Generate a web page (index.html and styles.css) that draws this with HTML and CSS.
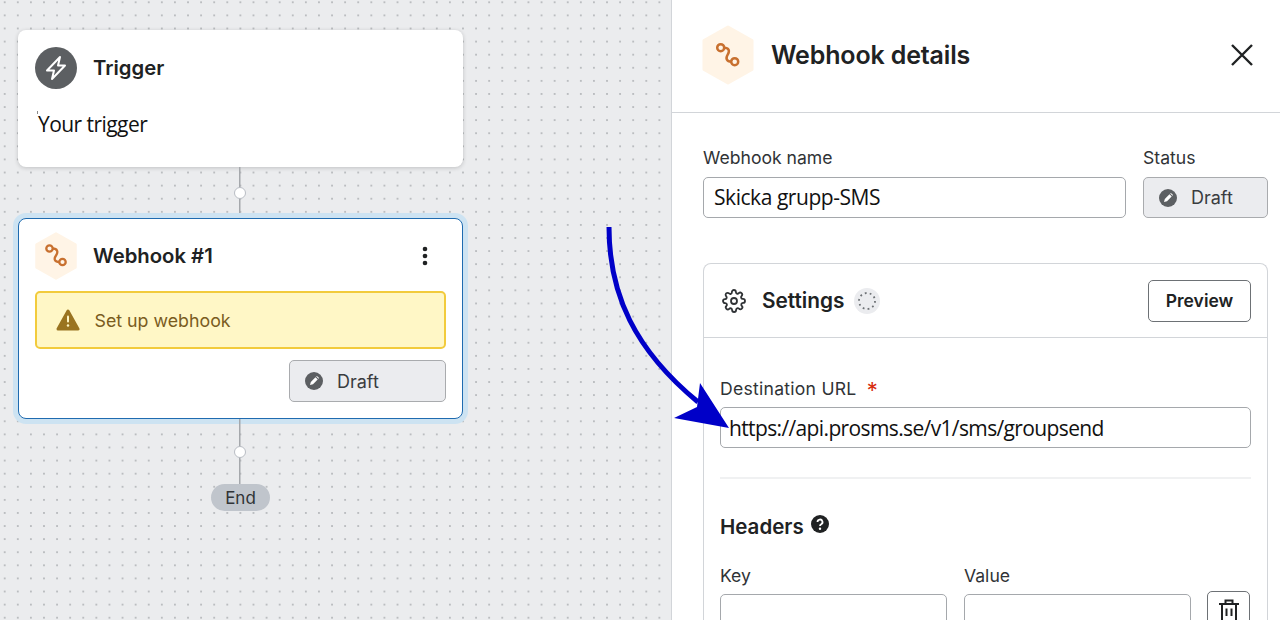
FILE: index.html
```html
<!DOCTYPE html>
<html lang="en">
<head>
  <meta charset="UTF-8" />
  <meta name="viewport" content="width=device-width, initial-scale=1.0"/>
  <title>Webhook details</title>
  <link rel="stylesheet" href="styles.css">
</head>
<body>
  <svg class="defs" width="0" height="0">
    <symbol id="hook" viewBox="0 0 52 60">
      <path d="M26 2 50 15.500V44.500L26 58 2 44.500V15.500Z" fill="#fff4e6" stroke="#fff4e6" stroke-width="3" stroke-linejoin="round"/>
      <circle cx="18.700" cy="22.700" r="3.500" fill="none" stroke="#c8702f" stroke-width="2.500"/>
      <circle cx="32.700" cy="36.700" r="3.500" fill="none" stroke="#c8702f" stroke-width="2.500"/>
      <path d="M22 22.700C27 22.700 28 26 25.700 29.700 23.400 33.400 24.400 36.700 29.400 36.700" fill="none" stroke="#c8702f" stroke-width="2.500"/>
    </symbol>
    <symbol id="hook-small" viewBox="0 0 42 48">
      <path d="M21 1.500 40.500 12.500V35.500L21 46.500 1.500 35.500V12.500Z" fill="#fff4e6" stroke="#fff4e6" stroke-width="2.500" stroke-linejoin="round"/>
      <circle cx="14.500" cy="16.500" r="3.200" fill="none" stroke="#c8702f" stroke-width="2.300"/>
      <circle cx="27.500" cy="30" r="3.200" fill="none" stroke="#c8702f" stroke-width="2.300"/>
      <path d="M17.500 16.500C22.500 16.500 23.500 20 21 23.500 18.500 27 19.500 30 24.500 30" fill="none" stroke="#c8702f" stroke-width="2.300"/>
    </symbol>
    <symbol id="pencil" viewBox="0 0 18 18">
      <circle cx="9" cy="9" r="9" fill="#5c5f62"/>
      <path d="M5 13l.8-3 4.700-4.700 2.200 2.200L8 12.200z" fill="#fff"/>
      <path d="M11.200 4.600l.7-.7 2.200 2.200-.7.7z" fill="#fff"/>
    </symbol>
  </svg>

  <main class="canvas">
    <section class="card">
      <div class="card-head">
        <svg class="node-icon" viewBox="0 0 42 42">
          <circle cx="21" cy="21" r="21" fill="#5c5f62"/>
          <path d="M25 10 12 23.500H19L17 32 30 18.500H23Z" fill="none" stroke="#fff" stroke-width="2" stroke-linejoin="round"/>
        </svg>
        <h2>Trigger</h2>
      </div>
      <p class="card-text">Your trigger</p>
    </section>

    <div class="connector"><span class="dot"></span></div>

    <section class="card card-selected">
      <div class="card-head">
        <svg class="node-icon node-hex"><use href="#hook-small"/></svg>
        <h2>Webhook #1</h2>
        <svg class="more" width="6" height="20" viewBox="0 0 6 20">
          <circle cx="3" cy="3" r="2.300" fill="#202223"/>
          <circle cx="3" cy="10" r="2.300" fill="#202223"/>
          <circle cx="3" cy="17" r="2.300" fill="#202223"/>
        </svg>
      </div>
      <div class="banner">
        <svg width="24" height="22" viewBox="0 0 24 22">
          <path d="M12 2 22 20H2Z" fill="#9a7420" stroke="#9a7420" stroke-width="3" stroke-linejoin="round"/>
          <rect x="11" y="6.500" width="2" height="7" rx="1" fill="#fff7c6"/>
          <circle cx="12" cy="16.500" r="1.200" fill="#fff7c6"/>
        </svg>
        <span>Set up webhook</span>
      </div>
      <div class="card-foot">
        <button class="status status-node"><svg width="18" height="18"><use href="#pencil"/></svg>Draft</button>
      </div>
    </section>

    <div class="connector connector-long"><span class="dot"></span></div>
    <div class="end-pill">End</div>
  </main>

  <aside class="panel">
    <header class="panel-head">
      <svg class="panel-hex"><use href="#hook"/></svg>
      <h1>Webhook details</h1>
      <svg class="close" width="24" height="24" viewBox="0 0 24 24">
        <path d="M2 2 22 22M22 2 2 22" stroke="#202223" stroke-width="2.400" fill="none"/>
      </svg>
    </header>

    <div class="panel-body">
      <div class="name-row">
        <div class="field">
          <label>Webhook name</label>
          <div class="input input-text">Skicka grupp-SMS</div>
        </div>
        <div class="field">
          <label>Status</label>
          <button class="status"><svg width="18" height="18"><use href="#pencil"/></svg>Draft</button>
        </div>
      </div>

      <section class="settings">
        <div class="settings-head">
          <svg width="24" height="24" viewBox="0 0 24 24" fill="none" stroke="#303336" stroke-width="1.800" stroke-linejoin="round">
            <circle cx="12" cy="12" r="3"/>
            <path d="M19.400 15a1.650 1.650 0 0 0 .33 1.820l.06.06a2 2 0 0 1-2.830 2.830l-.06-.06a1.650 1.650 0 0 0-2.800 1.170V21a2 2 0 0 1-4 0v-.09a1.650 1.650 0 0 0-2.800-1.170l-.06.06a2 2 0 0 1-2.830-2.830l.06-.06a1.650 1.650 0 0 0-1.170-2.800H3a2 2 0 0 1 0-4h.09a1.650 1.650 0 0 0 1.170-2.800l-.06-.06a2 2 0 0 1 2.830-2.830l.06.06a1.650 1.650 0 0 0 2.800-1.170V3a2 2 0 0 1 4 0v.09a1.650 1.650 0 0 0 2.800 1.170l.06-.06a2 2 0 0 1 2.830 2.830l-.06.06a1.650 1.650 0 0 0 1.170 2.800H21a2 2 0 0 1 0 4h-.09a1.650 1.650 0 0 0-1.510 1z"/>
          </svg>
          <h3>Settings</h3>
          <svg width="26" height="26" viewBox="0 0 26 26">
            <circle cx="13" cy="13" r="13" fill="#ebecef"/>
            <circle cx="13" cy="13" r="8" fill="none" stroke="#6d7175" stroke-width="1.800" stroke-dasharray="1.800 3.230"/>
          </svg>
          <button class="preview">Preview</button>
        </div>

        <div class="settings-body">
          <label class="label-wide">Destination URL <span class="req">*</span></label>
          <div class="input input-text">https://api.prosms.se/v1/sms/groupsend</div>
          <hr>
          <h4>Headers
            <svg width="18" height="18" viewBox="0 0 18 18">
              <circle cx="9" cy="9" r="9" fill="#202223"/>
              <path d="M6.500 7a2.500 2.500 0 1 1 3.700 2.200c-.8.500-1.200.8-1.200 1.700" fill="none" stroke="#fff" stroke-width="1.800"/>
              <circle cx="9" cy="13.700" r="1.200" fill="#fff"/>
            </svg>
          </h4>
          <div class="kv-row">
            <div class="field">
              <label>Key</label>
              <div class="input"></div>
            </div>
            <div class="field">
              <label>Value</label>
              <div class="input"></div>
            </div>
            <button class="trash">
              <svg width="22" height="26" viewBox="0 0 22 26" fill="none" stroke="#202223" stroke-width="2">
                <path d="M1 6H21M7.500 6V2.500H14.500V6M4 6V23H18V6M8.500 10.500V18M13.500 10.500V18"/>
              </svg>
            </button>
          </div>
        </div>
      </section>
    </div>
  </aside>

  <svg class="arrow" width="140" height="215" viewBox="600 220 140 215">
    <path d="M609 227C609 295 635 350 698 402" fill="none" stroke="#0000c8" stroke-width="5"/>
    <path d="M729 428 700 383 697 407 674 418Z" fill="#0000c8"/>
  </svg>
</body>
</html>
```

FILE: styles.css
```css
* {
  box-sizing: border-box;
}

html, body {
  height: 100%;
}

body {
  margin: 0;
  display: flex;
  height: 620px;
  overflow: hidden;
  font-family: 'Inter', sans-serif;
  color: #202223;
  background: #fff;
  position: relative;
}

.defs {
  position: absolute;
}

h1, h2, h3, h4, p {
  margin: 0;
}

button {
  font-family: inherit;
  color: inherit;
  cursor: pointer;
}

/* left side, the flow canvas */
.canvas {
  flex: 0 0 671px;
  padding: 30px 0 0 18px;
  display: flex;
  flex-direction: column;
  background-color: #ebecee;
  background-image: radial-gradient(circle, #9a9da1 0.5px, transparent 0.9px);
  background-size: 13.100px 13.100px;
  background-position: -1.850px -4.250px;
}

.card {
  width: 445px;
  background: #fff;
  border-radius: 8px;
  box-shadow: 0 1px 4px rgba(23, 24, 24, 0.2);
  padding: 16px 16px 0 17px;
}

.card:first-child {
  height: 137px;
}

.card-selected {
  height: 201px;
  padding: 13px 16px 0 16px;
  border: 1.500px solid #1f6bb0;
  box-shadow: 0 0 0 5px #cde3f2;
}

.card-head {
  display: flex;
  align-items: center;
  gap: 16px;
}

.card-head h2 {
  font-size: 20.300px;
  font-weight: 600;
  line-height: 44px;
  flex: 1;
}

.node-icon {
  width: 42px;
  height: 42px;
  flex: none;
}

.node-hex {
  height: 48px;
}

.more {
  margin-right: 18px;
}

.card-text {
  position: relative;
  margin: 20px 0 0 3px;
  font-family: 'Open Sans', sans-serif;
  font-size: 21px;
  letter-spacing: -0.55px;
  color: #111;
}

/* stray tick left of the text in the original capture */
.card-text::before {
  content: "";
  position: absolute;
  left: -1px;
  top: 1px;
  width: 1px;
  height: 3px;
  background: #8a8a8a;
}

.connector {
  align-self: flex-start;
  width: 444px;
  height: 51px;
  display: flex;
  align-items: center;
  justify-content: center;
  background: linear-gradient(#a5a8ac, #a5a8ac) center / 1.500px 100% no-repeat;
}

.connector-long {
  height: 65px;
}

.dot {
  width: 12px;
  height: 12px;
  border-radius: 50%;
  background: #fff;
  border: 1.500px solid #b9bdc4;
}

.banner {
  margin-top: 11px;
  height: 58px;
  display: flex;
  align-items: center;
  gap: 15px;
  padding-left: 18.500px;
  background: #fff7c6;
  border: 2.500px solid #f2cb3c;
  border-radius: 5px;
  color: #7a5c1e;
  font-size: 17.800px;
  line-height: 24px;
}

.banner span {
  padding-top: 1px;
}

.card-foot {
  display: flex;
  justify-content: flex-end;
  margin-top: 11px;
}

.status {
  width: 125px;
  height: 41px;
  display: flex;
  align-items: center;
  gap: 14px;
  padding: 0 0 0 15px;
  background: #ebecef;
  border: 1.500px solid #a9abae;
  border-radius: 5px;
  font-size: 18px;
  color: #3a3c3f;
}

.status-node {
  width: 157px;
  height: 42px;
}

.end-pill {
  width: 59px;
  height: 27px;
  margin-left: 193px;
  border-radius: 14px;
  background: #c0c5cc;
  text-align: center;
  font-size: 17px;
  line-height: 28px;
  color: #303336;
}

/* right side, the details panel */
.panel {
  flex: 1;
  min-width: 0;
  border-left: 1.500px solid #d2d5d9;
  background: #fff;
}

.panel-head {
  height: 113px;
  padding: 0 26px 2px 30px;
  display: flex;
  align-items: center;
  gap: 17px;
  border-bottom: 1.500px solid #d2d5d9;
}

.panel-head h1 {
  flex: 1;
  font-size: 25px;
  font-weight: 600;
  letter-spacing: -0.15px;
}

.panel-hex {
  width: 52px;
  height: 60px;
}

.panel-body {
  padding: 34px 12px 0 31px;
}

label {
  display: block;
  font-size: 17.600px;
  line-height: 22px;
  color: #303336;
}

.label-wide {
  letter-spacing: 0.25px;
}

.name-row {
  display: grid;
  grid-template-columns: 423px 125px;
  gap: 17px;
}

.name-row label {
  margin-bottom: 8px;
}

.input {
  height: 41px;
  background: #fff;
  border: 1.500px solid #a5a8ac;
  border-radius: 5px;
}

.input-text {
  padding-left: 10px;
  font-family: 'Open Sans', sans-serif;
  font-size: 21px;
  line-height: 38px;
  letter-spacing: -0.45px;
  color: #111;
}

.settings-body .input-text {
  padding-left: 8px;
  line-height: 40px;
  letter-spacing: -0.63px;
}

.settings {
  margin-top: 45px;
  height: 357px;
  overflow: hidden;
  border: 1.500px solid #d2d5d9;
  border-bottom: 0;
  border-radius: 8px 8px 0 0;
}

.settings-head {
  height: 74px;
  padding: 0 16px 0 18px;
  display: flex;
  align-items: center;
  border-bottom: 1.500px solid #d2d5d9;
}

.settings-head h3 {
  margin: 0 10px 0 16px;
  font-size: 20.800px;
  font-weight: 600;
}

.preview {
  margin-left: auto;
  width: 103px;
  height: 42px;
  background: #fff;
  border: 1.500px solid #6d7175;
  border-radius: 5px;
  font-size: 17.500px;
  font-weight: 600;
}

.settings-body {
  padding: 40px 16px 0;
}

.settings-body > label {
  margin-bottom: 7px;
}

.req {
  margin-left: 5px;
  font-size: 22px;
  line-height: 16px;
  vertical-align: -3px;
  color: #d72c0d;
}

hr {
  margin: 29px 0 0;
  border: 0;
  height: 1.500px;
  background: #f0f1f2;
}

h4 {
  display: flex;
  align-items: flex-start;
  gap: 7px;
  margin-top: 36px;
  font-size: 20.500px;
  font-weight: 600;
  line-height: 24px;
}

h4 svg {
  margin-top: 0;
}

.kv-row {
  display: grid;
  grid-template-columns: 227px 227px 42px;
  column-gap: 17px;
  margin-top: 26px;
}

.kv-row label {
  margin-bottom: 7px;
}

.trash {
  margin: 26px 0 0 -1px;
  height: 42px;
  padding: 6px 0 0;
  display: flex;
  justify-content: center;
  background: #fff;
  border: 1.500px solid #6d7175;
  border-radius: 5px;
}

/* annotation drawn over the screenshot */
.arrow {
  position: absolute;
  left: 600px;
  top: 220px;
}
```
